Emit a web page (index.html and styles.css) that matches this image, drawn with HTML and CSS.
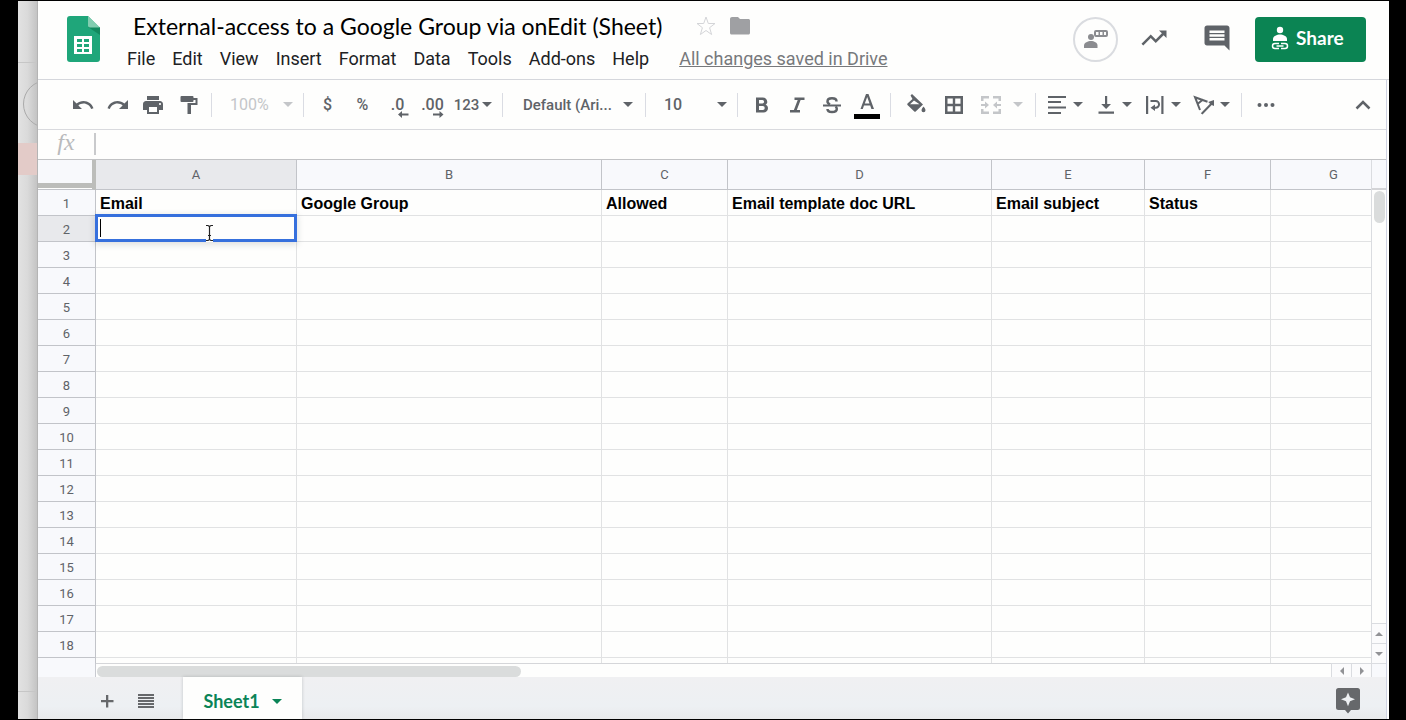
FILE: index.html
```html
<!DOCTYPE html>
<html lang="en">
<head>
<meta charset="utf-8">
<title>External-access to a Google Group via onEdit (Sheet)</title>
<link rel="stylesheet" href="styles.css">
</head>
<body>
<div class="backdrop"><span class="ring"></span><span class="rule rule-top"></span><span class="patch"></span><span class="rule rule-bottom"></span></div>
<main class="app">
  <header class="header">
    <svg class="logo" viewBox="0 0 33 46" aria-hidden="true">
      <path fill="#1fa67a" d="M3 0h18l12 12v31a3 3 0 0 1-3 3H3a3 3 0 0 1-3-3V3a3 3 0 0 1 3-3z"/>
      <path fill="#12895f" d="M21 11h12v8z"/>
      <path fill="#82cdb0" d="M21 0l12 11.500H23a2 2 0 0 1-2-2z"/>
      <path fill="#fff" fill-rule="evenodd" d="M7 20h18v18H7zM10 23v3h5v-3zM17 23v3h5v-3zM10 28v3h5v-3zM17 28v3h5v-3zM10 33v3h5v-3zM17 33v3h5v-3z"/>
    </svg>
    <div class="doc">
      <div class="title-row">
        <h1 class="title">External-access to a Google Group via onEdit (Sheet)</h1>
        <button class="plain" aria-label="Star"><svg width="24" height="24" viewBox="0 0 24 24"><path fill="none" stroke="#d4d5d8" d="M12 3l2.300 6.500H21l-5.400 4.200 2 6.800L12 16.500l-5.600 4 2-6.800L3 9.500h6.700z"/></svg></button>
        <button class="plain" aria-label="Move to folder"><svg width="24" height="24" viewBox="0 0 24 24"><path fill="#9fa0a3" d="M10 3H4c-1.100 0-2 .9-2 2v14c0 .8.700 1.500 1.500 1.500h17c.8 0 1.500-.7 1.500-1.500V6.500c0-.8-.7-1.500-1.500-1.500H12z"/></svg></button>
      </div>
      <nav class="menu">
        <button>File</button><button>Edit</button><button>View</button><button>Insert</button><button>Format</button><button>Data</button><button>Tools</button><button>Add-ons</button><button>Help</button>
        <a class="saved" href="#">All changes saved in Drive</a>
      </nav>
    </div>
    <div class="actions">
      <button class="avatar" aria-label="Join chat"><svg width="24" height="20" viewBox="0 0 24 20"><g fill="#8b8c90"><circle cx="7" cy="7" r="3"/><path d="M0 18v-2.500C0 12.500 4 11 7 11s6.500 1.500 6.500 4.500V18z"/><path fill-rule="evenodd" d="M12 0h10a2 2 0 0 1 2 2v3a2 2 0 0 1-2 2H12a2 2 0 0 1-2-2V2a2 2 0 0 1 2-2zM12 2v3h2.500V2zM16 2v3h2.500V2zM20 2v3h2V2z"/></g></svg></button>
      <button class="action" aria-label="Activity"><svg width="30" height="30" viewBox="0 0 24 24"><path d="M16 6l2.290 2.290-4.880 4.880-4-4L2 16.590 3.410 18l6-6 4 4 6.300-6.290L22 12V6z"/></svg></button>
      <button class="action" aria-label="Comments"><svg width="30" height="30" viewBox="0 0 24 24"><path d="M21.990 4c0-1.100-.89-2-1.990-2H4c-1.100 0-2 .9-2 2v12c0 1.100.9 2 2 2h14l4 4-.01-18zM18 14H6v-2h12v2zm0-3H6V9h12v2zm0-3H6V6h12v2z"/></svg></button>
      <button class="share"><svg width="18" height="24" viewBox="0 0 18 24"><circle cx="9" cy="4" r="3.200" fill="#fff"/><path fill="#fff" d="M2 15v-2c0-3 4-4.500 7-4.500s7 1.500 7 4.500v2z"/><path fill="none" stroke="#fff" stroke-width="1.500" d="M8 17.500H4a2.500 2.500 0 0 0 0 5h4M10 17.500h4a2.500 2.500 0 0 1 0 5h-4M5.500 20h7"/></svg>Share</button>
    </div>
  </header>
  <div class="workspace">
    <div class="toolbar" role="toolbar">
      <button class="tool" aria-label="Undo"><svg viewBox="0 0 24 24"><path d="M12.500 8c-2.650 0-5.050.99-6.900 2.600L2 7v9h9l-3.620-3.620c1.390-1.160 3.160-1.880 5.120-1.880 3.540 0 6.550 2.310 7.600 5.500l2.370-.78C21.080 11.030 17.150 8 12.500 8z"/></svg></button>
      <button class="tool" aria-label="Redo"><svg viewBox="0 0 24 24"><path d="M18.400 10.600C16.550 8.990 14.150 8 11.500 8c-4.650 0-8.580 3.030-9.960 7.220L3.900 16c1.050-3.190 4.050-5.500 7.600-5.500 1.950 0 3.730.72 5.120 1.880L13 16h9V7l-3.600 3.600z"/></svg></button>
      <button class="tool" aria-label="Print"><svg viewBox="0 0 24 24"><path d="M19 8H5c-1.660 0-3 1.340-3 3v6h4v4h12v-4h4v-6c0-1.660-1.340-3-3-3zm-3 11H8v-5h8v5zm3-7c-.55 0-1-.45-1-1s.45-1 1-1 1 .45 1 1-.45 1-1 1zm-1-9H6v4h12V3z"/></svg></button>
      <button class="tool" aria-label="Paint format"><svg viewBox="0 0 24 24"><path d="M5.500 3h11q1 0 1 1v1H21.500v7H15v9h-3.500V10H19.500V7h-2v1q0 1-1 1h-11q-1 0-1-1V4q0-1 1-1z"/></svg></button>
      <span class="sep"></span>
      <label class="pick pick-zoom off"><select aria-label="Zoom" disabled><option>100%</option></select></label>
      <span class="sep"></span>
      <button class="tool">$</button>
      <button class="tool">%</button>
      <button class="tool decimal" aria-label="Decrease decimal places">.0<svg width="11" height="7" viewBox="0 0 11 7"><path d="M4 0v2.500h6.500v2H4V7L0 3.500z"/></svg></button>
      <button class="tool decimal" aria-label="Increase decimal places">.00<svg width="11" height="7" viewBox="0 0 11 7"><path d="M6.500 0v2.500H0v2h6.500V7l4-3.500z"/></svg></button>
      <button class="tool formats">123<i class="caret"></i></button>
      <span class="sep"></span>
      <label class="pick pick-font"><select aria-label="Font"><option>Default (Ari...</option></select></label>
      <span class="sep"></span>
      <label class="pick pick-size"><select aria-label="Font size"><option>10</option></select></label>
      <span class="sep"></span>
      <button class="tool" aria-label="Bold"><svg viewBox="0 0 24 24"><path d="M15.600 11.800c1-.7 1.700-1.800 1.700-2.800 0-2.700-2-4.500-4.600-4.500H6v15h7.500c2.500 0 4.500-2 4.500-4.300 0-1.600-.9-2.800-2.400-3.400zM9 7h3.300a1.800 1.800 0 0 1 0 3.600H9zm3.800 10H9v-3.900h3.800a1.950 1.950 0 0 1 0 3.900z"/></svg></button>
      <button class="tool" aria-label="Italic"><svg viewBox="0 0 24 24"><path d="M9.500 4.500v2.500h3.200L8.900 17H5v2.500h10V17h-3.200L15.600 7h3.900V4.500z"/></svg></button>
      <button class="tool" aria-label="Strikethrough"><svg viewBox="0 0 24 24"><path d="M3 11.500h18v2H3z"/><path fill="none" stroke="#5f6368" stroke-width="2.500" d="M16.500 8.500c0-2-2-3.200-4.500-3.200S7.500 6.500 7.500 8.500c0 1.500 1 2.300 2.500 3M7.500 16c0 2 2 3 4.500 3s4.800-1 4.800-3c0-1.200-.5-2-1.300-2.500"/></svg></button>
      <button class="tool" aria-label="Text color"><svg class="ink" width="26" height="28" viewBox="0 0 26 28"><path fill-rule="evenodd" d="M12 3h2.500l5.500 15h-2.600l-1.200-3.500H10L8.800 18H6.500zM13.200 6l-2.400 6.500h4.700z"/><path fill="#000" d="M0 23h26v5H0z"/></svg></button>
      <span class="sep"></span>
      <button class="tool wide" aria-label="Fill color"><svg viewBox="0 0 24 24"><path fill-rule="evenodd" d="M6.500 2.500L8 1l11 10.500-7.300 7q-.7.700-1.400 0L3.500 12q-.6-.7 0-1.400l5-4.700zM10 7.500L6 11.300h9.500zM19.500 13.500s2 2.300 2 3.700a2 2 0 0 1-4 0c0-1.400 2-3.700 2-3.700z"/></svg></button>
      <button class="tool wide" aria-label="Borders"><svg viewBox="0 0 24 24"><path fill-rule="evenodd" d="M3 3h18v18H3zM5.500 5.500v5.300h5.300V5.500zM13.200 5.500v5.300h5.300V5.500zM5.500 13.200v5.300h5.300v-5.300zM13.200 13.200v5.300h5.300v-5.300z"/></svg></button>
      <button class="tool merge off" aria-label="Merge cells" disabled><svg viewBox="0 0 24 24"><path d="M2 3h8v2.500H4.500V8H2zM14 3h8v5h-2.500V5.500H14zM2 16h2.500v2.500H10V21H2zM19.500 16H22v5h-8v-2.500h5.500zM2 11h4V8.500l4 3.500-4 3.500V13H2zM22 11h-4V8.500L14 12l4 3.500V13h4z"/></svg><i class="caret"></i></button>
      <span class="sep"></span>
      <button class="tool menu-tool" aria-label="Horizontal align"><svg viewBox="0 0 24 24"><path d="M3 3h18v2H3zM3 8h13v2H3zM3 13.500h18v2H3zM3 19h13v2H3z"/></svg><i class="caret"></i></button>
      <button class="tool menu-tool" aria-label="Vertical align"><svg viewBox="0 0 24 24"><path d="M11 3h2.200v8H17l-4.900 5-4.900-5H11zM4.500 18.500h15.500v2.300H4.500z"/></svg><i class="caret"></i></button>
      <button class="tool menu-tool" aria-label="Text wrapping"><svg viewBox="0 0 24 24"><path d="M3 3h2.200v18H3zM18.300 3h2.200v18h-2.200zM12 11.500V18l-4.500-3.200z"/><path fill="none" stroke="#5f6368" stroke-width="2" d="M7.500 8h5.200a3.300 3.300 0 0 1 0 6.700H11"/></svg><i class="caret"></i></button>
      <button class="tool menu-tool end" aria-label="Text rotation"><svg viewBox="0 0 24 24"><path fill="none" stroke="#5f6368" stroke-width="2" d="M8 17L3 4.200l12.500 4.600M5.500 11l5.500-4.500"/><path d="M8.800 20.200l9.200-9.500-1.800-1.800L22 7v6l-2.300-.9-9.200 9.500z"/></svg><i class="caret"></i></button>
      <span class="sep"></span>
      <button class="tool" aria-label="More"><svg viewBox="0 0 24 24"><circle cx="5.500" cy="12" r="2"/><circle cx="12" cy="12" r="2"/><circle cx="18.500" cy="12" r="2"/></svg></button>
      <button class="tool collapse" aria-label="Hide the menus"><svg viewBox="0 0 24 24"><path fill="none" stroke="#5f6368" stroke-width="2.500" d="M5.500 15.500l6.500-6.500 6.500 6.500"/></svg></button>
    </div>
    <div class="formula"><label class="fx" for="formula">fx</label><input id="formula" type="text"></div>
    <div class="sheet">
      <div class="grid-view">
        <table class="grid">
          <colgroup><col class="c-num"><col class="c-a"><col class="c-b"><col class="c-s"><col class="c-d"><col class="c-e"><col class="c-s"><col class="c-s"></colgroup>
          <thead><tr><th class="corner"></th><th class="current">A</th><th>B</th><th>C</th><th>D</th><th>E</th><th>F</th><th>G</th></tr></thead>
          <tbody>
            <tr class="names"><th>1</th><td>Email</td><td>Google Group</td><td>Allowed</td><td>Email template doc URL</td><td>Email subject</td><td>Status</td><td></td></tr>
            <tr><th class="current">2</th><td class="active"><div class="editor"><span class="text-caret"></span><input type="text" aria-label="A2"></div><svg class="pointer" width="9" height="18" viewBox="0 0 9 18"><path fill="none" stroke="#fff" stroke-width="3" d="M1 1.500h2l1.500 1 1.500-1h2M4.500 2.500v13M1 16.500h2l1.500-1 1.500 1h2"/><path fill="none" stroke="#222" stroke-width="1.200" d="M1 1.500h2l1.500 1 1.500-1h2M4.500 2.500v13M1 16.500h2l1.500-1 1.500 1h2M3 11.500h3"/></svg></td><td></td><td></td><td></td><td></td><td></td><td></td></tr>
            <tr><th>3</th><td></td><td></td><td></td><td></td><td></td><td></td><td></td></tr>
            <tr><th>4</th><td></td><td></td><td></td><td></td><td></td><td></td><td></td></tr>
            <tr><th>5</th><td></td><td></td><td></td><td></td><td></td><td></td><td></td></tr>
            <tr><th>6</th><td></td><td></td><td></td><td></td><td></td><td></td><td></td></tr>
            <tr><th>7</th><td></td><td></td><td></td><td></td><td></td><td></td><td></td></tr>
            <tr><th>8</th><td></td><td></td><td></td><td></td><td></td><td></td><td></td></tr>
            <tr><th>9</th><td></td><td></td><td></td><td></td><td></td><td></td><td></td></tr>
            <tr><th>10</th><td></td><td></td><td></td><td></td><td></td><td></td><td></td></tr>
            <tr><th>11</th><td></td><td></td><td></td><td></td><td></td><td></td><td></td></tr>
            <tr><th>12</th><td></td><td></td><td></td><td></td><td></td><td></td><td></td></tr>
            <tr><th>13</th><td></td><td></td><td></td><td></td><td></td><td></td><td></td></tr>
            <tr><th>14</th><td></td><td></td><td></td><td></td><td></td><td></td><td></td></tr>
            <tr><th>15</th><td></td><td></td><td></td><td></td><td></td><td></td><td></td></tr>
            <tr><th>16</th><td></td><td></td><td></td><td></td><td></td><td></td><td></td></tr>
            <tr><th>17</th><td></td><td></td><td></td><td></td><td></td><td></td><td></td></tr>
            <tr><th>18</th><td></td><td></td><td></td><td></td><td></td><td></td><td></td></tr>
            <tr><th></th><td></td><td></td><td></td><td></td><td></td><td></td><td></td></tr>
          </tbody>
        </table>
      </div>
      <div class="vscroll"><div class="vscroll-top"></div><div class="thumb"></div><button class="step" aria-label="Scroll up"><i class="up"></i></button><button class="step" aria-label="Scroll down"><i class="down"></i></button></div>
      <div class="hscroll"><div class="gutter"></div><div class="track"><div class="thumb"></div></div><button class="step" aria-label="Scroll left"><i class="left"></i></button><button class="step" aria-label="Scroll right"><i class="right"></i></button></div>
      <div class="scroll-corner"></div>
    </div>
    <footer class="tabs">
      <button class="tab-tool" aria-label="Add sheet"><svg width="16" height="16" viewBox="0 0 16 16"><path d="M7 2h2.300v5H14.500v2.300H9.300v5.200H7V9.300H2V7h5z"/></svg></button>
      <button class="tab-tool" aria-label="All sheets"><svg width="16" height="16" viewBox="0 0 16 16"><path d="M0 1h16v2H0zM0 4h16v2H0zM0 7h16v2H0zM0 10h16v2H0zM0 13h16v2H0z"/></svg></button>
      <button class="tab">Sheet1<i class="caret"></i></button>
      <button class="explore" aria-label="Explore"><svg width="24" height="26" viewBox="0 0 24 26"><path fill-rule="evenodd" d="M2.500 0h19A2.500 2.500 0 0 1 24 2.500v17a2.500 2.500 0 0 1-2.500 2.500H15l-3 3.500L9 22H2.500A2.500 2.500 0 0 1 0 19.500v-17A2.500 2.500 0 0 1 2.500 0zM12 4.500l-2 4.700L5 11.200l5 2 2 5 2-5 5-2-5-2z"/></svg></button>
    </footer>
  </div>
</main>
</body>
</html>
```

FILE: styles.css
```css
* { box-sizing: border-box; }

body {
  display: flex;
  height: 100vh;
  margin: 0;
  padding: 1px 17px 1px 18px;
  background: #000;
  font-family: Roboto, "Liberation Sans", sans-serif;
  color: #202124;
}

button, select, input { font: inherit; color: inherit; border: 0; margin: 0; padding: 0; background: none; }
button { cursor: pointer; }
svg { display: block; flex: none; fill: currentColor; }

.backdrop {
  position: relative;
  flex: none;
  width: 20px;
  overflow: hidden;
  background: linear-gradient(90deg, #e2e2e2, #dadada 50%, #c4c4c4);
  border-right: 1px solid #b4b4b4;
}
.backdrop span { position: absolute; left: 0; }
.rule { width: 100%; height: 1px; background: #c6c6c6; }
.rule-top { top: 61px; }
.rule-bottom { top: 690px; }
.patch { top: 142px; width: 100%; height: 32px; background: #e3cbc8; }
.backdrop .ring { top: 79px; left: 5px; width: 48px; height: 48px; border: 1px solid #aaa; border-radius: 50%; }

.app { display: flex; flex-direction: column; flex: 1; min-width: 0; background: #fefefd; }

.header {
  display: flex;
  flex: none;
  height: 79px;
  padding: 11px 23px 0 29px;
  border-bottom: 1px solid #d5d7dc;
}
.logo { width: 33px; height: 46px; margin-top: 4px; }
.doc { flex: 1; min-width: 0; padding-left: 18px; }
.title-row { display: flex; align-items: center; gap: 10px; height: 28px; padding-left: 15px; margin-bottom: 7px; }
.title { margin: 0 22px 0 0; font: 400 23px/28px Lato, sans-serif; color: #000; white-space: nowrap; }
.menu { display: flex; align-items: center; height: 24px; font-size: 18px; line-height: 24px; white-space: nowrap; }
.menu button { padding: 0 8px 0 9px; }
.saved { margin-left: 22px; color: #77797c; }
.actions { display: flex; align-items: center; height: 45px; margin-top: 5px; color: #5f6368; }
.avatar { display: grid; place-items: center; width: 45px; height: 45px; margin-right: 4px; border: 2px solid #dadce0; border-radius: 50%; }
.action { display: grid; place-items: center; width: 63px; height: 45px; padding-bottom: 3px; }
.share {
  display: flex;
  align-items: center;
  gap: 7px;
  width: 111px;
  height: 45px;
  margin-left: 7px;
  padding: 0 16px 3px;
  border-radius: 4px;
  background: #0b8453;
  color: #fff;
  font: 700 19px/24px Lato, sans-serif;
}

.workspace { display: flex; flex-direction: column; flex: 1; min-height: 0; margin-right: 2px; border-right: 1px solid #d0d3e2; }

.toolbar { display: flex; align-items: center; flex: none; height: 50px; padding: 0 6px 0 27px; border-bottom: 1px solid #d9dade; color: #5f6368; font-size: 16px; font-weight: 500; }
.tool { display: flex; align-items: center; justify-content: center; flex: none; width: 35px; height: 36px; font-size: 16px; color: #5f6368; }
.tool svg { width: 24px; height: 24px; }
.sep { flex: none; width: 1px; height: 24px; margin: 0 6px; background: #dadce3; }
.caret { flex: none; border: 5px solid transparent; border-top-color: currentColor; border-bottom: 0; }
.off { color: #c4c6c9; }
.tool.off { color: #c4c6c9; }
.pick { display: grid; align-items: center; flex: none; height: 36px; }
.pick select { grid-area: 1 / 1; width: 100%; height: 36px; appearance: none; opacity: 1; }
.pick::after { content: ""; grid-area: 1 / 1; justify-self: end; border: 5px solid transparent; border-top-color: currentColor; border-bottom: 0; pointer-events: none; }
.pick-zoom { width: 79px; padding: 0 4px 0 12px; font-weight: 400; }
.pick-font { width: 130px; padding: 0 6px 0 14px; font-size: 15px; }
.pick-size { width: 79px; padding: 0 4px 0 12px; }
.decimal { position: relative; }
.tool.decimal svg { position: absolute; right: 6px; bottom: 5px; width: 11px; height: 7px; }
.formats { width: 46px; gap: 3px; }
.tool.formats { font-size: 15px; }
.tool .ink { width: 26px; height: 28px; }
.wide { width: 38px; }
.merge { width: 56px; gap: 10px; }
.menu-tool { width: 49px; gap: 4px; justify-content: flex-start; padding-left: 3px; }
.menu-tool.end { width: 46px; }
.collapse { margin-left: auto; }

.formula { display: flex; align-items: center; flex: none; height: 30px; padding-bottom: 2px; border-bottom: 1px solid #c2c3c5; }
.fx { width: 56px; padding-bottom: 3px; text-align: center; font: italic 24px/24px "Liberation Serif", serif; color: #b9babc; }
.formula input { flex: 1; height: 22px; padding: 0 4px; border-left: 2px solid #c9cacc; font-size: 16px; }

.sheet { display: grid; grid-template: minmax(0, 1fr) 14px / minmax(0, 1fr) 15px; flex: 1; min-height: 0; }
.grid-view { overflow: hidden; }
.grid { width: 1359px; table-layout: fixed; border-collapse: separate; border-spacing: 0; }
.c-num { width: 58px; }
.c-a { width: 201px; }
.c-b { width: 305px; }
.c-s { width: 126px; }
.c-d { width: 264px; }
.c-e { width: 153px; }
.grid th, .grid td { height: 26px; padding: 2px 0 0; border: solid #e1e2e3; border-width: 0 1px 1px 0; }
.grid th { background: #f8f9fc; border-color: #c2c4c9; font-size: 13px; font-weight: 400; line-height: 16px; color: #5f6368; }
.grid thead th { height: 30px; padding: 0; }
.grid th.current { background: #e8e9ec; }
.grid th.corner { border-right: 4px solid #bcbdba; background: linear-gradient(#f8f9fc 23px, #bcbdba 23px, #bcbdba 28px, #fefefd 28px); }
.grid td { padding-left: 4px; font: 16px/20px "Liberation Sans", Arial, sans-serif; color: #000; white-space: nowrap; }
.names td { font-weight: 700; }
.grid .active { position: relative; }
.editor { position: absolute; inset: -2px -1px -1px -1px; display: flex; align-items: center; padding: 0 2px; border: 3px solid #3670dd; background: #fefefd; box-shadow: 0 2px 6px 1px rgba(60, 64, 67, .15); }
.editor input { flex: 1; min-width: 0; height: 20px; outline: 0; }
.text-caret { width: 1px; height: 18px; background: #000; }
.pointer { position: absolute; left: 109px; top: 8px; }

.vscroll { display: flex; flex-direction: column; border-left: 1px solid #dadce0; }
.vscroll-top { height: 30px; background: #f8f9fc; border-bottom: 2px solid #d3d4d7; }
.vscroll .thumb { width: 11px; height: 32px; margin: 1px 2px auto; border-radius: 6px; background: #dadcdc; }
.step { display: grid; place-items: center; flex: none; color: #919295; background: #fbfbfc; }
.vscroll .step { height: 20px; border-top: 1px solid #dadce0; }
.step i { border: 4px solid transparent; }
.step .up { border-top-width: 0; border-bottom-color: currentColor; }
.step .down { border-bottom-width: 0; border-top-color: currentColor; }
.step .left { border-left-width: 0; border-right-color: currentColor; }
.step .right { border-right-width: 0; border-left-color: currentColor; }
.hscroll { display: flex; }
.gutter { flex: none; width: 58px; background: #f8f9fc; border-right: 1px solid #c8cad0; }
.track { flex: 1; padding: 2px 1px 0; border-top: 1px solid #d5d6d9; }
.track .thumb { width: 424px; height: 11px; border-radius: 6px; background: #dadcdc; }
.hscroll .step { width: 20px; border: solid #dadce0; border-width: 1px 0 0 1px; }
.scroll-corner { background: #f8f9fc; border: solid #dadce0; border-width: 1px 0 0 1px; }

.tabs { display: flex; align-items: center; flex: none; height: 42px; padding: 0 26px 0 49px; background: linear-gradient(#f0f0f2, #edf0f3 70%, #e8e9eb); color: #66686b; }
.tab-tool { display: grid; place-items: center; width: 39px; height: 36px; margin-top: 6px; }
.tab { display: flex; align-items: center; justify-content: center; gap: 12px; width: 119px; height: 42px; margin-left: 18px; padding-top: 6px; background: #fefefd; box-shadow: 0 0 3px rgba(60, 64, 67, .25); color: #0b8457; font: 700 18px/24px Lato, sans-serif; }
.explore { margin: 6px 0 0 auto; }
```
